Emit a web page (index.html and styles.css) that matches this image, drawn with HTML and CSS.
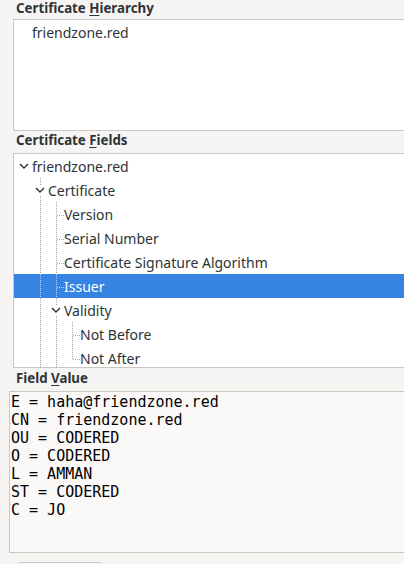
FILE: index.html
```html
<!DOCTYPE html>
<html>
<head>
<meta charset="utf-8">
<link rel="stylesheet" href="styles.css">
</head>
<body>
<div class="dialog">
  <div class="label l1">Certificate <u>H</u>ierarchy</div>
  <div class="box hier">
    <div class="row"><span class="cell"></span><span class="text">friendzone.red</span></div>
  </div>
  <div class="label l2">Certificate <u>F</u>ields</div>
  <div class="box tree">
    <div class="row"><span class="cell exp"><svg viewBox="0 0 10 10"><polyline points="1,3 5,7 9,3"/></svg></span><span class="text">friendzone.red</span></div>
    <div class="row"><span class="cell"></span><span class="cell v exp"><svg viewBox="0 0 10 10"><polyline points="1,3 5,7 9,3"/></svg></span><span class="text">Certificate</span></div>
    <div class="row"><span class="cell"></span><span class="cell v"></span><span class="cell t"></span><span class="text">Version</span></div>
    <div class="row"><span class="cell"></span><span class="cell v"></span><span class="cell t"></span><span class="text">Serial Number</span></div>
    <div class="row"><span class="cell"></span><span class="cell v"></span><span class="cell t"></span><span class="text">Certificate Signature Algorithm</span></div>
    <div class="row sel"><span class="cell"></span><span class="cell v"></span><span class="cell t"></span><span class="text">Issuer</span></div>
    <div class="row"><span class="cell"></span><span class="cell v"></span><span class="cell v exp"><svg viewBox="0 0 10 10"><polyline points="1,3 5,7 9,3"/></svg></span><span class="text">Validity</span></div>
    <div class="row"><span class="cell"></span><span class="cell v"></span><span class="cell v"></span><span class="cell t"></span><span class="text">Not Before</span></div>
    <div class="row"><span class="cell"></span><span class="cell v"></span><span class="cell v"></span><span class="cell l"></span><span class="text">Not After</span></div>
  </div>
  <div class="label l3">Field <u>V</u>alue</div>
  <pre class="valuebox">E = haha@friendzone.red
CN = friendzone.red
OU = CODERED
O = CODERED
L = AMMAN
ST = CODERED
C = JO</pre>
  <div class="btnrow"><span class="btn"></span></div>
</div>
</body>
</html>
```
FILE: styles.css
```css
html, body {
  margin: 0;
  padding: 0;
}
body {
  background: #f6f5f4;
  font-family: "Noto Sans", sans-serif;
  font-size: 14px;
  color: #2e3436;
  width: 404px;
  height: 564px;
  overflow: hidden;
}
.dialog {
  display: flex;
  flex-direction: column;
}
.label {
  font-weight: bold;
  font-size: 13.3px;
  padding-left: 16px;
  color: #2e3436;
}
.label u {
  text-decoration-thickness: 1px;
  text-underline-offset: 2px;
}
.l1 { line-height: 17px; height: 19px; }
.l2 { line-height: 19px; height: 22px; }
.l3 { line-height: 21px; height: 23px; }

.box {
  margin-left: 13px;
  margin-right: -20px;
  border: 1px solid #cdc7c2;
  border-right: none;
  background: #ffffff;
}
.hier { height: 110px; }
.tree { height: 213px; overflow: hidden; }

.row {
  --dot: #a8a7a4;
  --bg: #ffffff;
  display: flex;
  align-items: flex-start;
  height: 24px;
  padding-left: 2px;
  white-space: nowrap;
}
.row.sel {
  --dot: rgba(255,255,255,0.65);
  --bg: #3584e4;
  background: #3584e4;
  color: #ffffff;
}
.cell {
  position: relative;
  width: 16px;
  height: 24px;
  flex: none;
}
.cell.v::before,
.cell.t::before,
.cell.l::before {
  content: "";
  position: absolute;
  left: 8px;
  top: 0;
  width: 1px;
  height: 24px;
  background-image: linear-gradient(to bottom, var(--dot) 50%, transparent 50%);
  background-size: 1px 2px;
}
.cell.l::before { height: 13px; }
.cell.t::after,
.cell.l::after {
  content: "";
  position: absolute;
  left: 9px;
  top: 13px;
  width: 7px;
  height: 1px;
  background-image: linear-gradient(to right, var(--dot) 50%, transparent 50%);
  background-size: 2px 1px;
}
.cell.exp svg {
  position: absolute;
  left: 3px;
  top: 7px;
  width: 10px;
  height: 10px;
  background: var(--bg);
}
.cell.exp polyline {
  fill: none;
  stroke: #2e3436;
  stroke-width: 1.4;
}
.text {
  line-height: 24px;
  padding-top: 1px;
}

.valuebox {
  margin: 0 -20px 0 9px;
  height: 162px;
  box-sizing: border-box;
  border: 1px solid #cdc7c2;
  border-right: none;
  background: #faf9f8;
  font-family: "DejaVu Sans Mono", monospace;
  font-size: 15px;
  line-height: 18px;
  padding: 1px 0 0 1px;
  color: #000000;
  white-space: pre;
}
.btnrow {
  padding: 9px 0 0 16px;
}
.btn {
  display: block;
  width: 86px;
  height: 30px;
  border: 1px solid #cdc7c2;
  border-radius: 5px;
  background: #f9f8f7;
}
```
